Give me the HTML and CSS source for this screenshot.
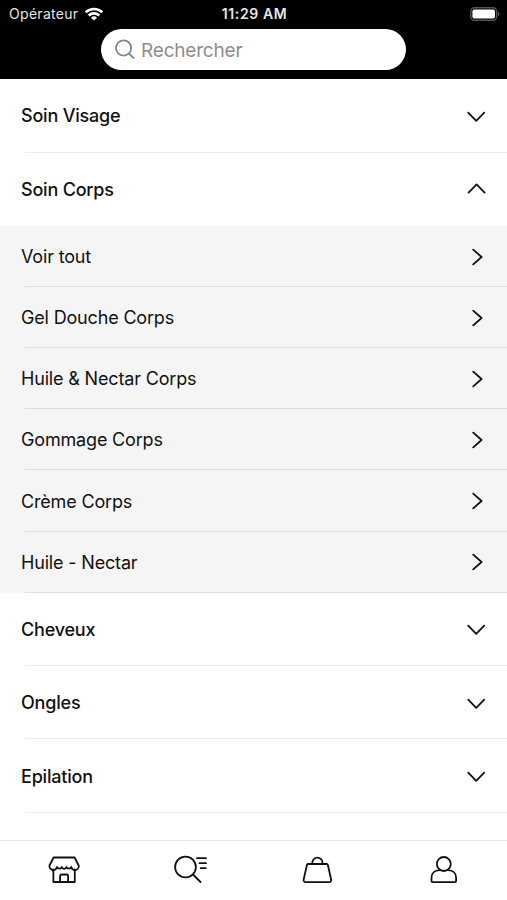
FILE: index.html
```
<!DOCTYPE html>
<html lang="fr">
<head>
  <meta charset="UTF-8">
  <meta name="viewport" content="width=device-width, initial-scale=1.0">
  <title>Rechercher</title>
  <link rel="stylesheet" href="styles.css">
</head>
<body>
  <svg class="defs">
    <symbol id="down" viewBox="0 0 20 20"><path d="M2.200 6.600 10.200 14.800 18.200 6.600"/></symbol>
    <symbol id="up" viewBox="0 0 20 20"><path d="M2.600 13.600 10.600 5.400 18.600 13.600"/></symbol>
    <symbol id="right" viewBox="0 0 20 20"><path d="M7.200 2.600 15.600 10 7.200 17.400"/></symbol>
  </svg>

  <header class="header">
    <div class="status">
      <div class="carrier">
        <span>Opérateur</span>
        <svg class="wifi" viewBox="0 0 20 14">
          <path d="M1.7 5.3a12 12 0 0 1 16.6 0M4.7 8.5a7.7 7.7 0 0 1 10.6 0"/>
          <path class="fill" d="M10 13.6 7 10.7a4.3 4.3 0 0 1 6 0z"/>
        </svg>
      </div>
      <div class="time">11:29 AM</div>
      <svg class="battery" viewBox="0 0 30 14">
        <rect x=".8" y=".8" width="25.8" height="12.4" rx="3.6"/>
        <rect class="level" x="2.4" y="2.4" width="22.6" height="9.2" rx="2"/>
        <path class="nub" d="M27.9 4.6c2 .8 2 4 0 4.8z"/>
      </svg>
    </div>
    <div class="search">
      <svg class="search-icon" viewBox="0 0 22 22"><circle cx="9.6" cy="9" r="7.6"/><path d="M15 14.6 19.6 19"/></svg>
      <span>Rechercher</span>
    </div>
  </header>

  <main class="list">
    <div class="item"><span>Soin Visage</span><svg class="arrow"><use href="#down"/></svg></div>
    <div class="item open"><span>Soin Corps</span><svg class="arrow"><use href="#up"/></svg></div>
    <div class="sub-list">
      <div class="sub-item"><span>Voir tout</span><svg class="arrow"><use href="#right"/></svg></div>
      <div class="sub-item"><span>Gel Douche Corps</span><svg class="arrow"><use href="#right"/></svg></div>
      <div class="sub-item"><span>Huile &amp; Nectar Corps</span><svg class="arrow"><use href="#right"/></svg></div>
      <div class="sub-item"><span>Gommage Corps</span><svg class="arrow"><use href="#right"/></svg></div>
      <div class="sub-item"><span>Crème Corps</span><svg class="arrow"><use href="#right"/></svg></div>
      <div class="sub-item"><span>Huile - Nectar</span><svg class="arrow"><use href="#right"/></svg></div>
    </div>
    <div class="item"><span>Cheveux</span><svg class="arrow"><use href="#down"/></svg></div>
    <div class="item"><span>Ongles</span><svg class="arrow"><use href="#down"/></svg></div>
    <div class="item"><span>Epilation</span><svg class="arrow"><use href="#down"/></svg></div>
  </main>

  <nav class="tabs">
    <div class="tab">
      <svg viewBox="0 0 34 30">
        <path d="M7.6 2.5h21L32.7 10.500a3.700 3.700 0 0 1-7.500 1.500 2.500 2.500 0 0 1-4.700 0 2.500 2.500 0 0 1-4.800 0 2.500 2.500 0 0 1-4.700 0 3.700 3.700 0 0 1-7.500-1.500z"/>
        <path d="M7.400 14.500V27h21.400V14.500M14.100 27v-6a1.500 1.500 0 0 1 1.500-1.500h5a1.500 1.500 0 0 1 1.500 1.500V27"/>
      </svg>
    </div>
    <div class="tab">
      <svg viewBox="0 0 34 30"><circle cx="12.5" cy="12" r="10.4"/><path d="M20 19.5 27.500 27M24 3.2h9M26.5 8.2h6.500M27.700 13.200h5"/></svg>
    </div>
    <div class="tab">
      <svg viewBox="0 0 34 30"><path d="M8 9h18.800a1 1 0 0 1 1 .8l3.400 15a2 2 0 0 1-2 2.400H5.600a2 2 0 0 1-2-2.400L7 9.800a1 1 0 0 1 1-.8zM12.300 9V7.700a5.100 5.100 0 0 1 10.200 0V9"/></svg>
    </div>
    <div class="tab">
      <svg viewBox="0 0 34 30"><circle cx="16.800" cy="9" r="7"/><path d="M12.500 15.200c-5 .2-8 3.400-8 7.400v3.300a1.200 1.200 0 0 0 1.200 1.200h22.200a1.200 1.200 0 0 0 1.200-1.200v-3.300c0-4-3-7.200-8-7.400"/></svg>
    </div>
  </nav>
</body>
</html>
```

FILE: styles.css
```
*{
  margin:0;
  padding:0;
  box-sizing:border-box;
}

body{
  display:flex;
  flex-direction:column;
  height:100vh;
  overflow:hidden;
  background:#fff;
  color:#111;
  font-family:Inter, "Liberation Sans", sans-serif;
}

svg{
  display:block;
  fill:none;
  stroke:#111;
  stroke-width:2;
  stroke-linecap:round;
  stroke-linejoin:round;
}

.defs{
  display:none;
}

.header{
  height:79.3px;
  flex:none;
  background:#000;
}

.status{
  display:grid;
  grid-template-columns:1fr auto 1fr;
  align-items:center;
  height:27px;
  padding:0 7px 0 9px;
  color:#e6e6e6;
  font-size:14px;
}

.carrier{
  display:flex;
  align-items:center;
  gap:6px;
  letter-spacing:0.3px;
}

.wifi{
  width:20px;
  height:14px;
  stroke:#fff;
  stroke-width:2.6;
  stroke-linecap:butt;
}

.wifi .fill{
  fill:#fff;
  stroke:none;
}

.time{
  font-weight:600;
  letter-spacing:0.6px;
}

.battery{
  width:30px;
  height:14px;
  justify-self:end;
  stroke:#555;
  stroke-width:1.4;
}

.battery .level{
  fill:#fff;
  stroke:none;
}

.battery .nub{
  fill:#555;
  stroke:none;
}

.search{
  display:flex;
  align-items:center;
  gap:5px;
  width:305px;
  height:41.4px;
  margin:2px auto 0;
  padding-left:13px;
  border-radius:21px;
  background:#fff;
  color:#8e8e8e;
  font-size:19px;
  letter-spacing:-0.2px;
}

.search span{
  padding-top:1px;
}

.search-icon{
  width:22px;
  height:22px;
  stroke:#858585;
  stroke-width:1.8;
}

.list{
  flex:1;
}

.item, .sub-item{
  display:flex;
  align-items:center;
  justify-content:space-between;
  padding:0 21px 0 21px;
  /* separator starts a little after the text edge */
  background:linear-gradient(#ececec, #ececec) 25px 100% / 100% 1px no-repeat;
}

.item{
  height:73.4px;
  font-size:18px;
  font-weight:500;
  letter-spacing:-0.2px;
}

.open{
  background:none;
}

.sub-list{
  background:#f5f5f5;
}

.sub-item{
  height:61.1px;
  font-size:18px;
  letter-spacing:-0.17px;
  background-image:linear-gradient(#dedede, #dedede);
}

.arrow{
  width:20px;
  height:20px;
  stroke-width:1.8;
}

.tabs{
  display:flex;
  flex:none;
  height:60px;
  border-top:1px solid #e8e8e8;
}

.tab{
  flex:1;
  display:flex;
  justify-content:center;
  padding-top:14px;
}

.tab svg{
  width:34px;
  height:30px;
  stroke-width:1.8;
}
```
